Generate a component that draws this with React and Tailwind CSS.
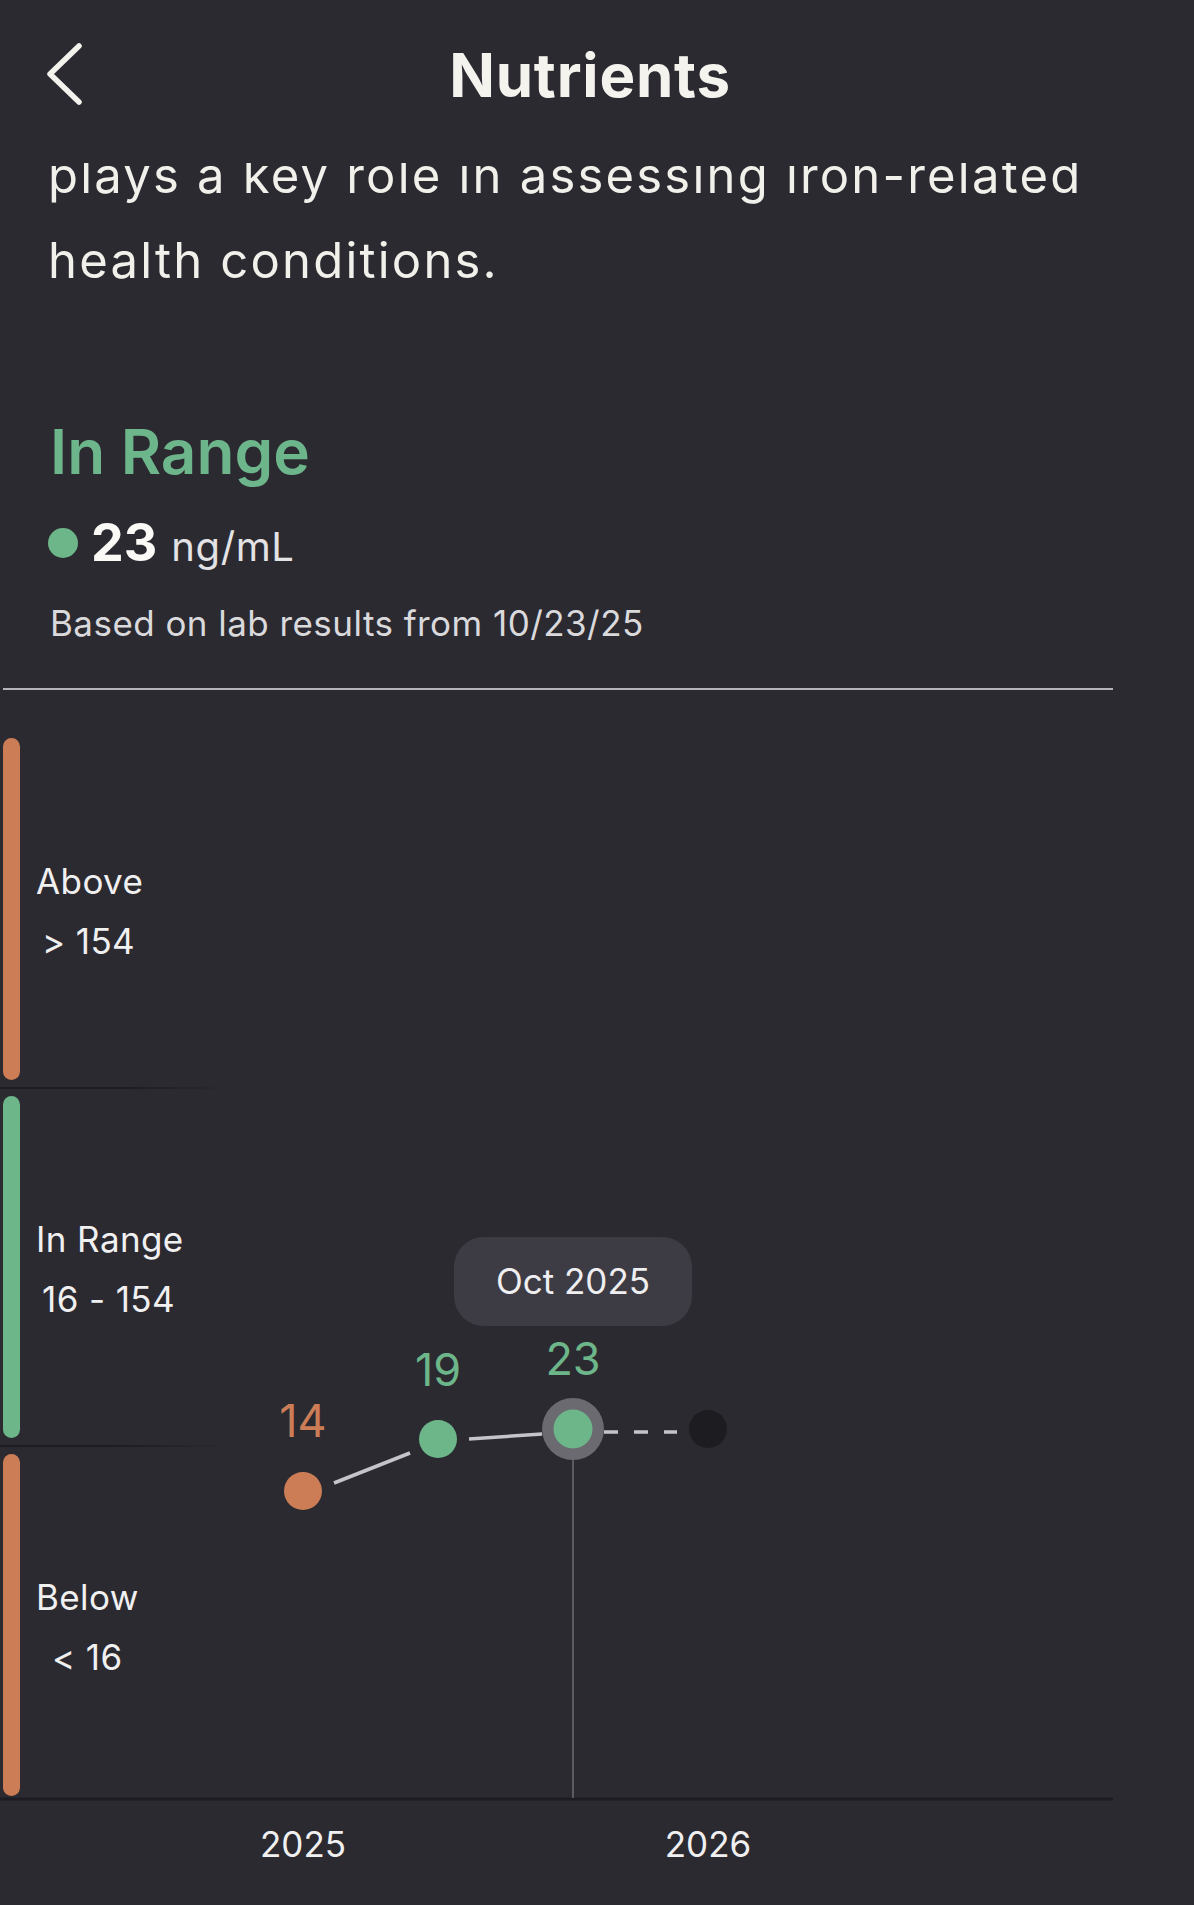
import React from "react";

const bands = [
  { label: "Above", value: "> 154", color: "bg-[#cd7d56]", pad: "pl-[6px]" },
  { label: "In Range", value: "16 - 154", color: "bg-[#6db68a]", pad: "pl-[6px]" },
  { label: "Below", value: "< 16", color: "bg-[#cd7d56]", pad: "pl-[16px]" },
];

const ChevronLeft = () => (
  <svg width="40" height="64" viewBox="0 0 40 64" className="-mt-[3px] ml-[46px]">
    <path
      d="M33 4 L4 32 L33 60"
      fill="none"
      stroke="#f4f2ec"
      strokeWidth="5.5"
      strokeLinecap="round"
      strokeLinejoin="round"
    />
  </svg>
);

const Band = ({ band }) => (
  <div className="flex h-[356px] py-[7px]">
    <div className={`ml-[3px] w-[17px] rounded-full ${band.color}`} />
    <div className="ml-[16px] flex flex-col justify-center pt-[3px] text-[35px] leading-[60px] tracking-[0.4px] text-[#f1f0f1]">
      <span>{band.label}</span>
      <span className={band.pad}>{band.value}</span>
    </div>
  </div>
);

const Separator = () => (
  <div className="h-[2px] w-[230px] bg-gradient-to-r from-[#1d1c22] via-[#1d1c22] to-transparent" />
);

const Chart = () => (
  <div className="relative mt-[41px] h-[1072px] w-[1113px]">
    <Band band={bands[0]} />
    <Separator />
    <Band band={bands[1]} />
    <Separator />
    <Band band={bands[2]} />

    <svg
      width="1113"
      height="1072"
      viewBox="0 0 1113 1072"
      className="pointer-events-none absolute inset-0"
    >
      <line x1="0" y1="1068" x2="1113" y2="1068" stroke="#1d1c22" strokeWidth="3" />
      <line x1="573" y1="729" x2="573" y2="1067" stroke="#6c6b71" strokeWidth="1.5" />
      <line x1="334" y1="752" x2="410" y2="722" stroke="#c5c4c8" strokeWidth="3.5" />
      <line x1="469" y1="708" x2="542" y2="703" stroke="#c5c4c8" strokeWidth="3.5" />
      <line
        x1="604"
        y1="701"
        x2="677"
        y2="701"
        stroke="#c5c4c8"
        strokeWidth="3.5"
        strokeDasharray="14 16"
      />
      <circle cx="303" cy="760" r="19" fill="#cd7d56" />
      <circle cx="438" cy="708" r="19" fill="#6db68a" />
      <circle cx="573" cy="698" r="31" fill="#6b6a70" />
      <circle cx="573" cy="698" r="19.5" fill="#6db68a" />
      <circle cx="708" cy="698" r="19" fill="#1d1c21" />
    </svg>

    <span className="absolute left-[303px] top-[667px] -translate-x-1/2 text-[45px] leading-none text-[#cd7d56]">
      14
    </span>
    <span className="absolute left-[438px] top-[616px] -translate-x-1/2 text-[45px] leading-none text-[#6db68a]">
      19
    </span>
    <span className="absolute left-[573px] top-[605px] -translate-x-1/2 text-[45px] leading-none text-[#6db68a]">
      23
    </span>
    <div className="absolute left-[454px] top-[506px] flex h-[89px] w-[238px] items-center justify-center rounded-[30px] bg-[#3d3c44] text-[35px] text-[#efeef0]">
      Oct 2025
    </div>
  </div>
);

export default function App() {
  return (
    <div className="h-[1905px] overflow-hidden bg-[#2b2a31] font-['Inter','Noto_Sans',sans-serif]">
      <header className="relative z-10 grid h-[163px] grid-cols-[1fr_auto_1fr] bg-[#2b2a31] pr-[14px] pt-[45px]">
        <div>
          <ChevronLeft />
        </div>
        <h1 className="text-[60px] font-bold leading-none tracking-[0.8px] text-[#f5f3ee]">
          Nutrients
        </h1>
        <div />
      </header>

      <p className="relative z-0 -mt-[30px] pl-[48px] text-[49px] leading-[85px] tracking-[2.2px] text-[#f2f0ea]">
        <span className="whitespace-nowrap">plays a key role in assessing iron-related</span>
        <br />
        health conditions.
      </p>

      <section className="px-[50px]">
        <h2 className="mt-[118px] text-[62px] font-semibold leading-none text-[#6db58a]">
          In Range
        </h2>
        <div className="-ml-[2px] mt-[34px] flex items-center">
          <span className="h-[30px] w-[30px] rounded-full bg-[#6db68a]" />
          <span className="ml-[13px] flex items-baseline">
            <span className="text-[52px] font-bold leading-none text-[#fbfaf7]">23</span>
            <span className="ml-[14px] text-[40px] leading-none tracking-[0.6px] text-[#e3e2e4]">
              ng/mL
            </span>
          </span>
        </div>
        <p className="mt-[37px] text-[35px] leading-none tracking-[0.45px] text-[#dad9dc]">
          Based on lab results from 10/23/25
        </p>
      </section>

      <div className="ml-[3px] mt-[47px] h-[2px] w-[1110px] bg-[#b4b3b8]" />

      <Chart />

      <div className="mt-[24px] flex text-[35px] leading-none text-[#f1f0f1]">
        <span className="ml-[233px] w-[140px] text-center">2025</span>
        <span className="ml-[265px] w-[140px] text-center">2026</span>
      </div>
    </div>
  );
}
